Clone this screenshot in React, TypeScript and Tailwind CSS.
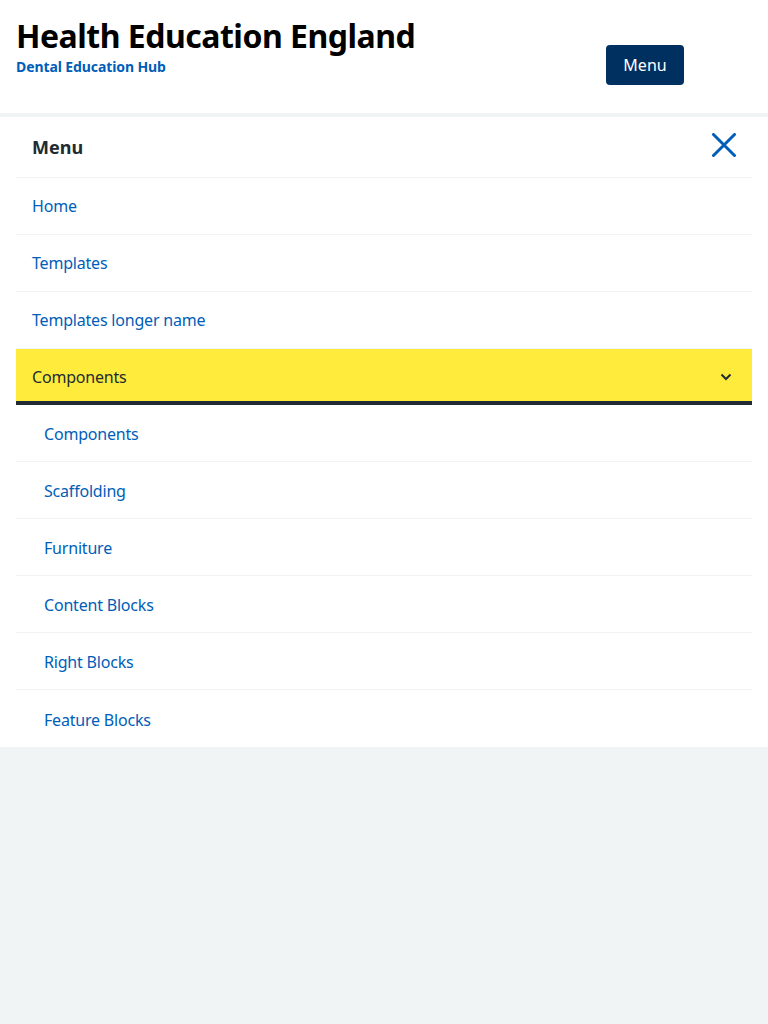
import { useState } from "react"

const topLinks = ["Home", "Templates", "Templates longer name"]
const subLinks = ["Components", "Scaffolding", "Furniture", "Content Blocks", "Right Blocks", "Feature Blocks"]

export default function App() {
  const [open, setOpen] = useState(true)

  return (
    <div className="min-h-screen bg-[#f0f4f5] font-['Noto_Sans',sans-serif] text-[#212b32]">
      {/* Header */}
      <header className="bg-white h-[113px] flex items-start justify-between pl-4 pr-[84px]">
        <div className="pt-[16px]">
          <div className="text-[32px] leading-[40px] font-bold text-black tracking-[-0.5px]">Health Education England</div>
          <div className="text-[14px] leading-[21px] font-bold text-[#005eb8] tracking-[-0.1px]">Dental Education Hub</div>
        </div>
        <button className="mt-[45px] w-[78px] h-[40px] rounded bg-[#003060] text-white text-[16px]">Menu</button>
      </header>

      {/* Menu panel */}
      <nav className="mt-1 bg-white px-4">
        <div className="h-[61px] border-b border-[#f0f4f5] flex items-center justify-between pl-4 pr-4">
          <span className="text-[18px] font-bold">Menu</span>
          <svg width="24" height="24" viewBox="0 0 24 24" className="text-[#005eb8] -mt-1">
            <path d="M1.5 1.5 L22.5 22.5 M22.5 1.5 L1.5 22.5" stroke="currentColor" strokeWidth="3" strokeLinecap="round" fill="none" />
          </svg>
        </div>

        {topLinks.map((name) => (
          <a key={name} href="#" className="h-[57px] border-b border-[#f0f4f5] flex items-center pl-4 text-[16px] text-[#005eb8] tracking-[-0.2px]">
            {name}
          </a>
        ))}

        <button
          onClick={() => setOpen(!open)}
          className="w-full h-[56px] bg-[#ffeb3b] border-b-4 border-[#212b32] flex items-center justify-between pl-4 pr-5 pt-1 text-[16px] tracking-[-0.2px]"
        >
          <span>Components</span>
          <svg width="12" height="8" viewBox="0 0 12 8" className={open ? "" : "rotate-180"}>
            <path d="M1.5 1.5 L6 6 L10.5 1.5" stroke="#212b32" strokeWidth="2" fill="none" />
          </svg>
        </button>

        {open &&
          subLinks.map((name, i) => (
            <a
              key={name}
              href="#"
              className={`h-[57px] flex items-center pl-7 pt-0.5 text-[16px] text-[#005eb8] tracking-[-0.2px] ${
                i < subLinks.length - 1 ? "border-b border-[#f0f4f5]" : ""
              }`}
            >
              {name}
            </a>
          ))}
      </nav>
    </div>
  )
}
